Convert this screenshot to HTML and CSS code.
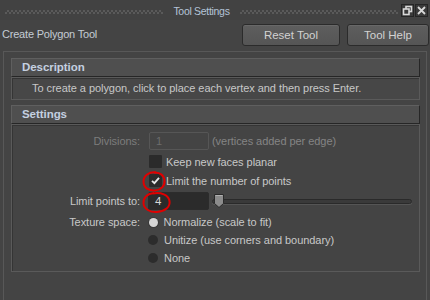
FILE: index.html
```html
<!DOCTYPE html>
<html lang="en">
<head>
    <meta charset="UTF-8">
    <title>Tool Settings</title>
    <link rel="stylesheet" href="styles.css">
</head>
<body>
    <div class="window">
        <div class="titlebar">
            <span class="grip"></span>
            <span class="title">Tool Settings</span>
            <span class="grip"></span>
            <span class="win-btns">
                <!-- restore -->
                <span class="win-btn">
                    <svg width="11" height="11" viewBox="0 0 11 11">
                        <rect x="4" y="1.5" width="5.5" height="5" fill="none" stroke="#d8d8d8" stroke-width="1.6"/>
                        <rect x="1.5" y="4" width="5.5" height="5.5" fill="#3a3a3a" stroke="#d8d8d8" stroke-width="1.6"/>
                    </svg>
                </span>
                <!-- close -->
                <span class="win-btn">
                    <svg width="11" height="11" viewBox="0 0 11 11">
                        <path d="M2 2L9 9M9 2L2 9" stroke="#d8d8d8" stroke-width="1.8"/>
                    </svg>
                </span>
            </span>
        </div>

        <div class="toolrow">
            <span class="tool-name">Create Polygon Tool</span>
            <button class="btn btn-reset">Reset Tool</button>
            <button class="btn btn-help">Tool Help</button>
        </div>

        <div class="frame">
            <div class="section">
                <div class="section-head">Description</div>
                <div class="section-body desc">To create a polygon, click to place each vertex and then press Enter.</div>
            </div>

            <div class="section">
                <div class="section-head">Settings</div>
                <div class="section-body settings">
                    <div class="row row-field">
                        <span class="lbl lbl-off">Divisions:</span>
                        <div class="ctl">
                            <span class="field field-off">1</span>
                            <span class="hint">(vertices added per edge)</span>
                        </div>
                    </div>
                    <div class="row row-check">
                        <span class="lbl"></span>
                        <div class="ctl">
                            <span class="check"></span>
                            <span>Keep new faces planar</span>
                        </div>
                    </div>
                    <div class="row row-check">
                        <span class="lbl"></span>
                        <div class="ctl">
                            <span class="check">
                                <svg width="13" height="13" viewBox="0 0 13 13">
                                    <path d="M3 6.8L5.4 9.2L10 3.8" fill="none" stroke="#e8e8e8" stroke-width="1.8"/>
                                </svg>
                            </span>
                            <span>Limit the number of points</span>
                        </div>
                    </div>
                    <div class="row row-slider">
                        <span class="lbl">Limit points to:</span>
                        <div class="ctl">
                            <span class="field field-on">4</span>
                            <div class="slider">
                                <div class="track"></div>
                                <svg class="thumb" width="12" height="16" viewBox="0 0 12 16">
                                    <path d="M1.5 1.5H10.5V10.5L6 14.5L1.5 10.5Z" fill="#8c8c8c" stroke="#2a2a2a"/>
                                    <path d="M2.5 2.5H9.5" stroke="#b0b0b0"/>
                                </svg>
                            </div>
                        </div>
                    </div>
                    <div class="row row-radio first">
                        <span class="lbl">Texture space:</span>
                        <div class="ctl">
                            <span class="radio radio-on"></span>
                            <span>Normalize (scale to fit)</span>
                        </div>
                    </div>
                    <div class="row row-radio">
                        <span class="lbl"></span>
                        <div class="ctl">
                            <span class="radio"></span>
                            <span>Unitize (use corners and boundary)</span>
                        </div>
                    </div>
                    <div class="row row-radio">
                        <span class="lbl"></span>
                        <div class="ctl">
                            <span class="radio"></span>
                            <span>None</span>
                        </div>
                    </div>

                    <!-- hand drawn marks -->
                    <svg class="marks" width="60" height="50" viewBox="0 0 60 50">
                        <path d="M16 3.5C9 2.5 3.5 7 3.5 12.5C3.5 19 9 22 15 21.5C21 21 25 17 24.5 11.5C24 6 19.5 3 14 4" fill="none" stroke="#e00000" stroke-width="2"/>
                        <path d="M14 24C7 24.5 3 29 3.5 34.5C4 40 10 43.5 17 43C25 42.5 30.5 38 29.5 32C28.5 26 21 23 13 24.5" fill="none" stroke="#e00000" stroke-width="2"/>
                    </svg>
                </div>
            </div>
        </div>
    </div>
</body>
</html>
```

FILE: styles.css
```css
    body {
        margin: 0;
        height: 300px;
        overflow: hidden;
        background-color: #444444;
        color: #c8c8c8;
        font-family: "Liberation Sans", Arial, sans-serif;
        font-size: 11px;
        letter-spacing: -0.05px;
    }
    .window {
        height: 300px;
        display: flex;
        flex-direction: column;
    }

    /* title bar */
    .titlebar {
        height: 20px;
        display: flex;
        align-items: center;
        padding: 0 2px 0 5px;
        background-color: #424242;
    }
    .grip {
        flex: 1;
        height: 4px;
        margin-top: 3px;
        background: repeating-conic-gradient(#5a5a5a 0 25%, transparent 0 50%) 0 0 / 4px 4px;
    }
    .title {
        margin: 2px 10px 0 10px;
        font-size: 10.5px;
        letter-spacing: -0.3px;
        color: #b4c4d8;
    }
    .win-btns {
        display: flex;
        gap: 1px;
        margin-left: 3px;
    }
    .win-btn {
        width: 13px;
        height: 13px;
        display: flex;
        justify-content: center;
        align-items: center;
        background-color: #3a3a3a;
        border: 1px solid #252525;
        box-sizing: border-box;
    }

    /* tool name + buttons */
    .toolrow {
        height: 28px;
        display: flex;
        align-items: center;
        padding: 0 1px 0 2px;
    }
    .tool-name {
        flex: 1;
        font-size: 11px;
        letter-spacing: -0.2px;
        color: #c4ccd4;
    }
    .btn {
        height: 22px;
        margin: 1px 0 0 7px;
        border: 1px solid #2b2b2b;
        border-radius: 3px;
        background: linear-gradient(#5e5e5e, #555555);
        box-shadow: inset 0 1px 0 #686868;
        color: #d2d2d2;
        font-family: inherit;
        font-size: 11.5px;
        padding: 0;
    }
    .btn-reset {
        width: 98px;
    }
    .btn-help {
        width: 82px;
    }

    /* framed area */
    .frame {
        flex: 1;
        margin: 3px 3px 0 3px;
        border: 1px solid #585858;
        border-bottom: none;
        padding: 6px 6px 0 7px;
    }
    .section + .section {
        margin-top: 5px;
    }
    .section-head {
        height: 19px;
        box-sizing: border-box;
        line-height: 17px;
        padding-left: 10px;
        background-color: #4f4f4f;
        border: 1px solid;
        border-color: #5f5f5f #262626 #262626 #5f5f5f;
        font-weight: bold;
        font-size: 11.5px;
        color: #c4d0e0;
    }
    .section-body {
        border: 1px solid #5a5a5a;
        box-shadow: inset 1px 1px 0 #353535;
        box-sizing: border-box;
    }
    .desc {
        height: 23px;
        line-height: 21px;
        padding-left: 20px;
        background-color: #474747;
    }
    .settings {
        position: relative;
        height: 148px;
        padding-top: 5px;
    }

    /* settings rows */
    .row {
        display: grid;
        grid-template-columns: 128px 1fr;
        column-gap: 8px;
        align-items: center;
    }
    .row-field, .row-slider {
        height: 22px;
    }
    .row-check {
        height: 19px;
    }
    .row-radio {
        height: 18px;
    }
    .row-radio.first {
        margin-top: 1px;
    }
    .lbl {
        text-align: right;
    }
    .lbl-off {
        color: #7c7c7c;
    }
    .ctl {
        display: flex;
        align-items: center;
    }
    .field {
        width: 61px;
        height: 18px;
        box-sizing: border-box;
        line-height: 16px;
        padding-left: 6px;
        border-radius: 2px;
    }
    .field-off {
        margin-left: 1px;
        width: 60px;
        border: 1px solid #565656;
        color: #6c6c6c;
    }
    .field-on {
        border: 1px solid #2c2c2c;
        background-color: #2b2b2b;
        color: #d8d8d8;
        font-size: 11.5px;
    }
    .hint {
        margin-left: 3px;
        color: #858585;
    }
    .check {
        width: 13px;
        height: 13px;
        margin: 0 4px 0 1px;
        background-color: #2b2b2b;
        border-radius: 1px;
        display: flex;
    }
    .radio {
        width: 10px;
        height: 10px;
        margin-right: 6px;
        border-radius: 50%;
        background-color: #2c2c2c;
    }
    .radio-on {
        background-color: #d6d6d6;
        box-shadow: 0 0 0 1px #3a3a3a;
        width: 9px;
        height: 9px;
        margin: 0 6px 0 0.5px;
    }

    /* slider */
    .slider {
        position: relative;
        flex: 1;
        height: 16px;
        margin: 0 7px 0 3px;
        display: flex;
        align-items: center;
    }
    .track {
        flex: 1;
        height: 3px;
        border: 1px solid #2a2a2a;
        border-radius: 3px;
        background-color: #3a3a3a;
        box-shadow: 0 1px 0 #555555;
    }
    .thumb {
        position: absolute;
        left: 1px;
        top: 0;
    }

    /* red annotation circles */
    .marks {
        position: absolute;
        left: 128px;
        top: 44px;
    }
```
